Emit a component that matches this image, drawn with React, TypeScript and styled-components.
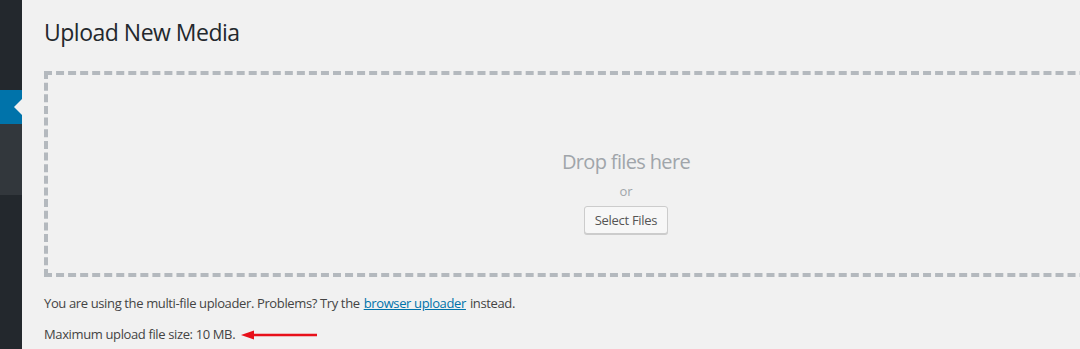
import React from "react";
import styled, { createGlobalStyle } from "styled-components";

const Global = createGlobalStyle`
  html, body {
    margin: 0;
    padding: 0;
    background: #f1f1f1;
    overflow: hidden;
  }
  body {
    font-family: "Open Sans", "Noto Sans", sans-serif;
    color: #444;
    font-size: 13px;
  }
`;

export default function App() {
  return (
    <>
      <Global />
      <Page>
        <Sidebar>
          <MenuTop />
          <MenuCurrent />
          <Submenu />
          <MenuRest />
        </Sidebar>

        <Content>
          <Title>Upload New Media</Title>

          <DropZone>
            <DropInside>
              <DropInfo>Drop files here</DropInfo>
              <Or>or</Or>
              <SelectButton type="button">Select Files</SelectButton>
            </DropInside>
          </DropZone>

          <Note>
            You are using the multi-file uploader. Problems? Try the{" "}
            <a href="#">browser uploader</a> instead.
          </Note>

          <Note>
            Maximum upload file size: 10 MB.
            <Arrow width="80" height="12" viewBox="0 0 80 12">
              <line x1="10" y1="6" x2="76" y2="6" stroke="#e8101a" strokeWidth="2.5" />
              <polygon points="0,6 13,1.5 13,10.5" fill="#e8101a" />
            </Arrow>
          </Note>
        </Content>
      </Page>
    </>
  );
}

const Page = styled.div`
  display: flex;
  width: 1080px;
  height: 349px;
  overflow: hidden;
`;

const Sidebar = styled.div`
  width: 22px;
  flex-shrink: 0;
  display: flex;
  flex-direction: column;
  background: #23282d;
`;

const MenuTop = styled.div`
  height: 90px;
`;

const MenuCurrent = styled.div`
  height: 34px;
  background: #0073aa;
  position: relative;

  &::after {
    content: "";
    position: absolute;
    right: 0;
    top: 50%;
    margin-top: -8px;
    border: 8px solid transparent;
    border-right-color: #f1f1f1;
    border-left-width: 0;
  }
`;

const Submenu = styled.div`
  height: 71px;
  background: #32373c;
`;

const MenuRest = styled.div`
  flex: 1;
`;

const Content = styled.div`
  padding-left: 22px;
  flex: 1;
  min-width: 0;
`;

const Title = styled.h1`
  margin: 0;
  padding: 18px 0 0;
  height: 71px;
  box-sizing: border-box;
  font-size: 23px;
  font-weight: 400;
  line-height: 29px;
  letter-spacing: -0.5px;
  color: #23282d;
`;

const DropZone = styled.div`
  width: 1164px;
  height: 206px;
  box-sizing: border-box;
  border: 4px dashed #b4b9be;
`;

const DropInside = styled.div`
  padding-top: 73px;
  display: flex;
  flex-direction: column;
  align-items: center;
`;

const DropInfo = styled.p`
  margin: 0;
  font-size: 20px;
  line-height: 28px;
  letter-spacing: -0.65px;
  color: #a0a5aa;
`;

const Or = styled.p`
  margin: 4px 0 0;
  font-size: 13px;
  line-height: 22px;
  color: #a0a5aa;
`;

const SelectButton = styled.button`
  margin-top: 4px;
  height: 28px;
  padding: 0 10px 1px;
  font-family: inherit;
  font-size: 13px;
  letter-spacing: -0.3px;
  color: #555;
  background: #f7f7f7;
  border: 1px solid #ccc;
  border-radius: 3px;
  box-shadow: 0 1px 0 #ccc;
`;

const Note = styled.p`
  margin: 17px 0 0;
  font-size: 13px;
  line-height: 19px;
  letter-spacing: -0.37px;
  display: flex;
  align-items: center;

  a {
    color: #0073aa;
    text-decoration: underline;
    margin: 0 4px;
  }

  & + & {
    margin-top: 12px;
  }
`;

const Arrow = styled.svg`
  margin-left: 6px;
  display: block;
`;
